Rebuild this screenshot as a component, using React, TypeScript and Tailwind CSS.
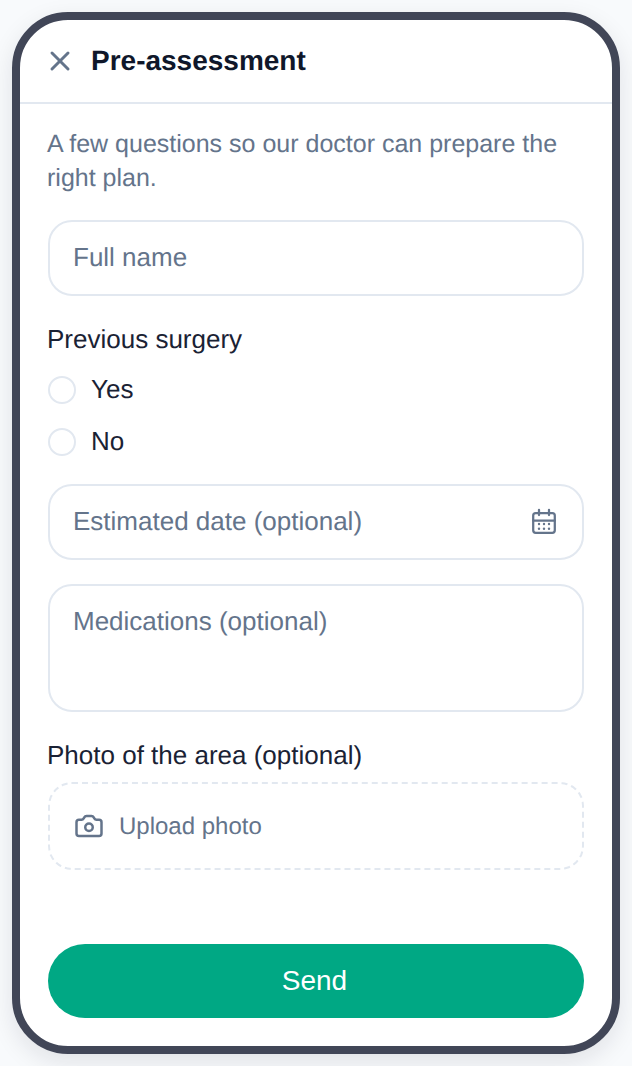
import { Camera, X } from "lucide-react";

const CalendarIcon = () => (
  <svg width="28" height="28" viewBox="0 0 28 28" fill="none" stroke="currentColor" strokeWidth="2.25" strokeLinecap="round">
    <rect x="3.2" y="5" width="21.6" height="19.8" rx="2.5" />
    <path d="M9 1.8V7M19 1.8V7M3.2 12.5H24.8" />
    <g fill="currentColor" stroke="none">
      <circle cx="9" cy="16" r="1.2" />
      <circle cx="14" cy="16" r="1.2" />
      <circle cx="19" cy="16" r="1.2" />
      <circle cx="9" cy="20.7" r="1.2" />
      <circle cx="14" cy="20.7" r="1.2" />
      <circle cx="19" cy="20.7" r="1.2" />
    </g>
  </svg>
);

const App = () => {
  return (
    <div className="w-[632px] h-[1066px] overflow-hidden bg-[#f8fafc] pt-3 px-3 font-['Liberation_Sans',Arial,sans-serif] [text-rendering:geometricPrecision]">
      <div className="flex flex-col w-[608px] h-[1042px] rounded-[56px] border-8 border-[#414657] bg-white overflow-hidden shadow-[0_8px_24px_rgba(15,23,42,0.1)]">
        <div className="flex items-center gap-[15px] h-[84px] shrink-0 border-b-2 border-[#e2e8f0] pl-[24px] pb-[2px]">
          <X size={32} strokeWidth={2.25} className="text-[#64748b] mt-[2px]" />
          <h1 className="text-[28px] leading-[34px] font-bold text-[#0f172a] mt-[2px]">Pre-assessment</h1>
        </div>
        <div className="flex flex-col flex-1 px-[28px] pt-[23px] pb-[28px]">
          <p className="text-[25px] leading-[34px] text-[#64748b] -ml-[1px]">
            A few questions so our doctor can prepare the right plan.
          </p>
          <div className="flex items-center h-[76px] mt-[25px] pb-[2px] rounded-[24px] border-2 border-[#e2e8f0] px-[23px] text-[26px] text-[#64748b]">
            Full name
          </div>
          <div className="mt-[25px] -ml-[1px] text-[26px] leading-[36px] text-[#1a2234]">Previous surgery</div>
          <div className="flex flex-col gap-[24px] mt-[19px]">
            <label className="flex items-center gap-[15px] h-[28px] text-[26px] text-[#1a2234]">
              <span className="w-[28px] h-[28px] rounded-full border-2 border-[#e2e8f0]" />
              <span className="-mt-[2px]">Yes</span>
            </label>
            <label className="flex items-center gap-[15px] h-[28px] text-[26px] text-[#1a2234]">
              <span className="w-[28px] h-[28px] rounded-full border-2 border-[#e2e8f0]" />
              <span className="-mt-[2px]">No</span>
            </label>
          </div>
          <div className="flex items-center justify-between h-[76px] mt-[28px] rounded-[24px] border-2 border-[#e2e8f0] pl-[23px] pr-[24px] text-[26px] text-[#64748b]">
            <span className="-mt-[2px]">Estimated date (optional)</span>
            <CalendarIcon />
          </div>
          <div className="h-[128px] mt-[24px] rounded-[24px] border-2 border-[#e2e8f0] px-[23px] pt-[18px] text-[26px] leading-[34px] text-[#64748b]">
            Medications (optional)
          </div>
          <div className="mt-[25px] -ml-[1px] text-[26px] leading-[36px] text-[#1a2234]">Photo of the area (optional)</div>
          <div className="flex items-center gap-[15px] h-[88px] mt-[9px] rounded-[24px] border-2 border-dashed border-[#e2e8f0] pl-[24px] text-[24px] text-[#64748b]">
            <Camera size={30} strokeWidth={2} />
            <span className="mt-[2px]">Upload photo</span>
          </div>
          <button className="flex items-center justify-center h-[74px] mt-auto pr-[3px] rounded-full bg-[#00a884] text-[28px] text-white">
            Send
          </button>
        </div>
      </div>
    </div>
  );
};

export default App;
